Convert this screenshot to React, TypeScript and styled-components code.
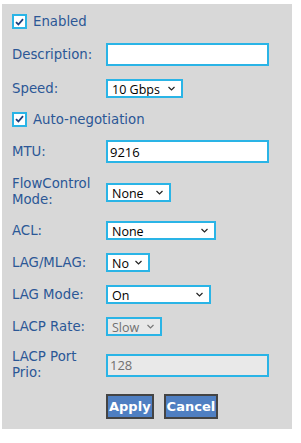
import React from "react";
import styled, { createGlobalStyle } from "styled-components";

const GlobalStyle = createGlobalStyle`
  body {
    margin: 0;
    background: #ffffff;
    font-family: "DejaVu Sans", Verdana, sans-serif;
  }
`;

const Panel = styled.form`
  display: flex;
  flex-direction: column;
  gap: 13px;
  width: 290px;
  box-sizing: border-box;
  margin: 4px 0 0 2px;
  padding: 9px 10px 10px 10px;
  background: #d8d8d8;
`;

const Row = styled.div<{ $h?: number }>`
  display: grid;
  grid-template-columns: 94px 1fr;
  align-items: center;
  min-height: ${(p) => (p.$h ? `${p.$h}px` : "auto")};
`;

const CheckRow = styled.label<{ $h?: number }>`
  display: flex;
  align-items: center;
  gap: 6px;
  height: ${(p) => (p.$h ? `${p.$h}px` : "auto")};
  color: #2b5796;
  font-size: 13.3px;
  cursor: pointer;
`;

const Box = styled.span`
  display: inline-flex;
  align-items: center;
  justify-content: center;
  width: 15px;
  height: 15px;
  box-sizing: border-box;
  border: 2px solid #2ab4e6;
  background: #ffffff;
`;

const Label = styled.span`
  color: #2b5796;
  font-size: 13.3px;
  line-height: 16px;
`;

const TextInput = styled.input`
  width: 163px;
  height: 23px;
  box-sizing: border-box;
  border: 2px solid #2ab4e6;
  background: #ffffff;
  padding: 0 2px;
  margin: 0;
  outline: none;
  font-family: "Open Sans", sans-serif;
  font-size: 13px;
  color: #000000;

  &:disabled {
    background: #e9e9e9;
    color: #707070;
  }
`;

const SelectWrap = styled.span<{ $w: number }>`
  position: relative;
  display: inline-block;
  width: ${(p) => p.$w}px;
  height: 19px;
`;

const NativeSelect = styled.select`
  appearance: none;
  width: 100%;
  height: 100%;
  box-sizing: border-box;
  border: 2px solid #2ab4e6;
  border-radius: 0;
  background: #ffffff;
  margin: 0;
  padding: 0 0 0 4px;
  outline: none;
  font-family: "Open Sans", sans-serif;
  font-size: 12.5px;
  color: #000000;

  &:disabled {
    background: #e8e8e8;
    color: #707070;
    opacity: 1;
  }
`;

const Chevron = styled.svg<{ $dim?: boolean }>`
  position: absolute;
  right: 8px;
  top: 7px;
  pointer-events: none;
  stroke: ${(p) => (p.$dim ? "#777777" : "#222222")};
`;

const Actions = styled.div`
  display: flex;
  gap: 10px;
  padding-left: 94px;
`;

const Button = styled.button`
  height: 25px;
  box-sizing: border-box;
  border: 2px solid #444444;
  background: #4f7fc2;
  color: #ffffff;
  font-family: "DejaVu Sans", Verdana, sans-serif;
  font-weight: bold;
  font-size: 13px;
  padding: 0 1px;
  margin: 0;
  cursor: pointer;
`;

function Check({ text, h }: { text: string; h?: number }) {
  return (
    <CheckRow $h={h}>
      <Box>
        <svg width="9" height="8" viewBox="0 0 9 8">
          <path
            d="M1 4.2 L3.4 6.5 L8 1.2"
            fill="none"
            stroke="#1f3f7c"
            strokeWidth="1.8"
          />
        </svg>
      </Box>
      {text}
    </CheckRow>
  );
}

function Select({
  w,
  value,
  options,
  disabled,
}: {
  w: number;
  value: string;
  options: string[];
  disabled?: boolean;
}) {
  return (
    <SelectWrap $w={w}>
      <NativeSelect defaultValue={value} disabled={disabled}>
        {options.map((o) => (
          <option key={o}>{o}</option>
        ))}
      </NativeSelect>
      <Chevron $dim={disabled} width="7" height="5" viewBox="0 0 7 5">
        <path d="M0.5 1 L3.5 4 L6.5 1" fill="none" strokeWidth="1.2" />
      </Chevron>
    </SelectWrap>
  );
}

export default function App() {
  return (
    <>
      <GlobalStyle />
      <Panel onSubmit={(e) => e.preventDefault()}>
        <Check text="Enabled" h={17} />
        <Row>
          <Label>Description:</Label>
          <TextInput defaultValue="" />
        </Row>
        <Row>
          <Label>Speed:</Label>
          <Select w={77} value="10 Gbps" options={["1 Gbps", "10 Gbps", "25 Gbps"]} />
        </Row>
        <Check text="Auto-negotiation" h={16} />
        <Row>
          <Label>MTU:</Label>
          <TextInput defaultValue="9216" />
        </Row>
        <Row $h={32}>
          <Label>
            FlowControl
            <br />
            Mode:
          </Label>
          <Select w={65} value="None" options={["None", "Rx", "Tx", "Both"]} />
        </Row>
        <Row>
          <Label>ACL:</Label>
          <Select w={110} value="None" options={["None"]} />
        </Row>
        <Row>
          <Label>LAG/MLAG:</Label>
          <Select w={44} value="No" options={["No", "Yes"]} />
        </Row>
        <Row>
          <Label>LAG Mode:</Label>
          <Select w={105} value="On" options={["On", "Active", "Passive"]} />
        </Row>
        <Row>
          <Label>LACP Rate:</Label>
          <Select w={56} value="Slow" options={["Slow", "Fast"]} disabled />
        </Row>
        <Row $h={32}>
          <Label>
            LACP Port
            <br />
            Prio:
          </Label>
          <TextInput defaultValue="128" disabled />
        </Row>
        <Actions>
          <Button type="submit">Apply</Button>
          <Button type="button">Cancel</Button>
        </Actions>
      </Panel>
    </>
  );
}
